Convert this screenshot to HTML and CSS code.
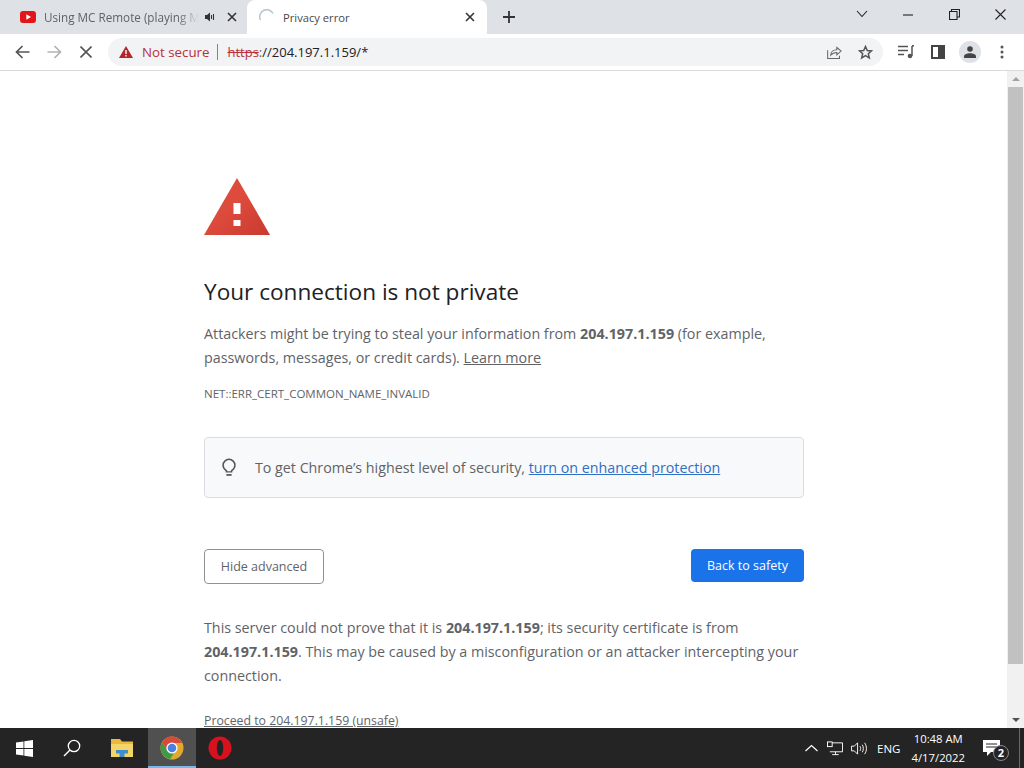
FILE: index.html
```html
<!DOCTYPE html>
<html lang="en">
<head>
    <meta charset="UTF-8">
    <title>Privacy error</title>
    <link rel="stylesheet" href="styles.css">
</head>
<body>
    <!-- Tabs -->
    <div class="tabstrip">
        <div class="tab">
            <svg class="yt-icon" width="16" height="12" viewBox="0 0 16 12"><rect width="16" height="12" rx="3" fill="#e3151a"/><path d="M6.300 3.200 11 6 6.300 8.800z" fill="#fff"/></svg>
            <span class="tab-title">Using MC Remote (playing MC</span>
            <svg class="tab-audio" width="10" height="10" viewBox="0 0 10 10"><path d="M0 3h2L5 .5v9L2 7H0z" fill="#333"/><path d="M6.500 3v4M8.500 2v6" stroke="#333" stroke-width="1.100"/></svg>
            <svg class="tab-close" width="10" height="10" viewBox="0 0 10 10"><path d="M1 1l8 8M9 1l-8 8" stroke="#333" stroke-width="1.600"/></svg>
        </div>
        <div class="tab tab-active">
            <svg class="tab-spinner" width="16" height="16" viewBox="0 0 16 16"><path d="M1.500 11A7 7 0 0 1 14 4.500" fill="none" stroke="#b9c3cc" stroke-width="1.500"/></svg>
            <span class="tab-title">Privacy error</span>
            <svg class="tab-close" width="10" height="10" viewBox="0 0 10 10"><path d="M1 1l8 8M9 1l-8 8" stroke="#333" stroke-width="1.600"/></svg>
        </div>
        <svg class="new-tab" width="12" height="12" viewBox="0 0 12 12"><path d="M6 0v12M0 6h12" stroke="#333" stroke-width="1.800"/></svg>
        <div class="window-controls">
            <svg width="12" height="8" viewBox="0 0 12 8"><path d="M1 1l5 5.500L11 1" fill="none" stroke="#222" stroke-width="1.100"/></svg>
            <svg width="11" height="11" viewBox="0 0 11 11"><path d="M0 6h10" stroke="#222" stroke-width="1.100"/></svg>
            <svg width="11" height="11" viewBox="0 0 11 11"><path d="M.5 2.500h7.500v8H.5zM2.500 2.500V.5h8v7.500H8" fill="none" stroke="#222" stroke-width="1.100"/></svg>
            <svg width="11" height="11" viewBox="0 0 11 11"><path d="M.5.5l10 10M10.500.5l-10 10" stroke="#222" stroke-width="1.100"/></svg>
        </div>
    </div>

    <!-- Toolbar -->
    <div class="toolbar">
        <svg class="nav-icon nav-back" width="15" height="14" viewBox="0 0 15 14"><path d="M14.500 7H2M7.500 1 1.500 7l6 6" fill="none" stroke="#555" stroke-width="1.700"/></svg>
        <svg class="nav-icon nav-forward" width="15" height="14" viewBox="0 0 15 14"><path d="M.5 7H13M7.500 1l6 6-6 6" fill="none" stroke="#b0b2b5" stroke-width="1.700"/></svg>
        <svg class="nav-icon nav-stop" width="12" height="12" viewBox="0 0 12 12"><path d="M.5.5l11 11M11.500.5l-11 11" stroke="#555" stroke-width="1.600"/></svg>
        <div class="omnibox">
            <svg class="warn-small" width="14" height="12" viewBox="0 0 14 12"><path d="M7 0l7 12H0z" fill="#b3262e"/><path d="M6.300 4h1.400v4H6.300zM6.300 9h1.400v1.500H6.300z" fill="#fff"/></svg>
            <span class="not-secure">Not secure</span>
            <span class="omni-sep"></span>
            <span class="url"><s class="url-scheme">https</s><span class="url-colon">:</span>//204.197.1.159/*</span>
            <svg class="omni-share" width="15" height="15" viewBox="0 0 16 15"><path d="M.7 5v9h12.600v-3" fill="none" stroke="#666" stroke-width="1.100"/><path d="M4 10.500c0-4 3-6 6.500-6V2L15 6l-4.500 4V7.500C8 7.500 5.500 8.500 4 10.500z" fill="none" stroke="#666" stroke-width="1.100"/></svg>
            <svg class="omni-star" width="15" height="15" viewBox="0 0 15 15"><path d="M7.500 1.500l1.800 4 4.200.4-3.200 2.800 1 4.200-3.800-2.200-3.800 2.200 1-4.200L1.500 5.900l4.200-.4z" fill="none" stroke="#555" stroke-width="1.500"/></svg>
        </div>
        <div class="toolbar-right">
            <svg class="tool-media" width="16" height="14" viewBox="0 0 16 14"><path d="M0 1.500h10M0 5.500h10M0 9.500h6" stroke="#555" stroke-width="1.500"/><path d="M14 1v10" stroke="#555" stroke-width="1.500"/><path d="M14 .8h2" stroke="#555" stroke-width="1.500"/><circle cx="12" cy="11" r="2.300" fill="#555"/></svg>
            <svg class="tool-panel" width="14" height="14" viewBox="0 0 14 14"><rect x="1" y="1" width="12" height="12" fill="none" stroke="#444" stroke-width="2"/><rect x="7" y="1" width="6" height="12" fill="#444"/></svg>
            <span class="avatar"><svg width="12" height="12" viewBox="0 0 12 12"><circle cx="6" cy="3" r="2.800" fill="#444"/><path d="M0 12V10.500C0 8.500 3 7.300 6 7.300s6 1.200 6 3.200V12z" fill="#444"/></svg></span>
            <svg class="tool-menu" width="4" height="14" viewBox="0 0 4 14"><circle cx="2" cy="2" r="1.500" fill="#555"/><circle cx="2" cy="7" r="1.500" fill="#555"/><circle cx="2" cy="12" r="1.500" fill="#555"/></svg>
        </div>
    </div>

    <!-- Page -->
    <div class="viewport">
        <div class="page">
            <svg class="warn-big" width="66" height="58" viewBox="0 0 66 58">
                <defs>
                    <linearGradient id="warn-fill" x1="0" y1="0" x2="1" y2="1">
                        <stop offset="0.450" stop-color="#dd4b3d"/>
                        <stop offset="1" stop-color="#c9392e"/>
                    </linearGradient>
                </defs>
                <path d="M33 0 66 57H0z" fill="url(#warn-fill)"/>
                <path d="M29.500 25h7v11h-7zM29.500 42h7v6h-7z" fill="#fff"/>
            </svg>
            <h1>Your connection is not private</h1>
            <p class="summary">Attackers might be trying to steal your information from <b>204.197.1.159</b> (for example, passwords, messages, or credit cards). <a href="#">Learn more</a></p>
            <p class="error-code">NET::ERR_CERT_COMMON_NAME_INVALID</p>
            <div class="tip">
                <svg width="14" height="19" viewBox="0 0 16 20"><path d="M5 13.500C2.500 12 1.200 10 1.200 7.500a6.800 6.800 0 0 1 13.600 0c0 2.500-1.300 4.500-3.800 6v1.500H5z" fill="none" stroke="#555" stroke-width="1.700"/><path d="M5 18.500h6" stroke="#555" stroke-width="2"/></svg>
                <span>To get Chrome’s highest level of security, <a class="link-blue" href="#">turn on enhanced protection</a></span>
            </div>
            <div class="buttons">
                <button class="btn-outline" type="button">Hide advanced</button>
                <button class="btn-primary" type="button">Back to safety</button>
            </div>
            <p class="details">This server could not prove that it is <b>204.197.1.159</b>; its security certificate is from <b>204.197.1.159</b>. This may be caused by a misconfiguration or an attacker intercepting your connection.</p>
            <a class="proceed" href="#">Proceed to 204.197.1.159 (unsafe)</a>
        </div>
        <div class="scrollbar">
            <span class="arrow-up"></span>
            <div class="thumb"></div>
            <span class="arrow-down"></span>
        </div>
    </div>

    <!-- Taskbar -->
    <div class="taskbar">
        <div class="task-item">
            <svg width="17" height="17" viewBox="0 0 17 17"><path d="M0 2.500 7.500 1.400v6.600H0zM8.300 1.300 17 0v8H8.300zM0 9h7.500v6.600L0 14.500zM8.300 9H17v8l-8.700-1.300z" fill="#fff"/></svg>
        </div>
        <div class="task-item">
            <svg width="18" height="18" viewBox="0 0 18 18"><circle cx="11" cy="7" r="5.700" fill="none" stroke="#fff" stroke-width="1.300"/><path d="M7 11 1 17" stroke="#fff" stroke-width="1.500"/></svg>
        </div>
        <div class="task-item task-folder">
            <svg width="22" height="18" viewBox="0 0 22 18"><path d="M0 0h9l2 2.500h11V18H0z" fill="#e9b83f"/><path d="M0 5h22v13H0z" fill="#f6d568"/><path d="M5 14.500V11h12v3.500h-3.500V18h-5v-3.500z" fill="#3f8fd0"/></svg>
        </div>
        <div class="task-item task-active">
            <svg width="24" height="24" viewBox="0 0 24 24"><circle cx="12" cy="12" r="11.500" fill="#e0a92e"/><path d="M12 .5A11.500 11.500 0 0 0 2.100 6.200L7 14.500 12 7h10a11.500 11.500 0 0 0-10-6.500z" fill="#d9493b"/><path d="M2.100 6.200A11.500 11.500 0 0 0 10 23.300L14.500 16 7 14.500z" fill="#3e9a4b"/><circle cx="12" cy="12" r="5.600" fill="#fff"/><circle cx="12" cy="12" r="4.300" fill="#4a7fe6"/></svg>
        </div>
        <div class="task-item">
            <svg width="24" height="24" viewBox="0 0 24 24"><circle cx="12" cy="12" r="11.500" fill="#d5121e"/><ellipse cx="12" cy="12" rx="3.200" ry="8" fill="#242424"/></svg>
        </div>
        <div class="tray">
            <svg class="tray-chevron" width="13" height="8" viewBox="0 0 13 8"><path d="M.5 7l6-5.500 6 5.500" fill="none" stroke="#fff" stroke-width="1.200"/></svg>
            <svg class="tray-net" width="16" height="15" viewBox="0 0 17 15"><path d="M3 1.500h13.500v9.500H3M9 11v3M5.500 14h7" fill="none" stroke="#fff"/><rect x=".5" y=".5" width="5" height="5" fill="#242424" stroke="#fff"/></svg>
            <svg class="tray-vol" width="16" height="15" viewBox="0 0 17 15"><path d="M.5 5h3L7 1.500v12L3.500 10h-3zM9.500 5c1 1.500 1 3.500 0 5M12 3.500c1.500 2.500 1.500 5.500 0 8M14.500 1.500c2.500 3.500 2.500 8.500 0 12" fill="none" stroke="#fff"/></svg>
            <span class="tray-lang">ENG</span>
            <div class="clock"><span>10:48 AM</span><span>4/17/2022</span></div>
            <span class="notify">
                <svg width="17" height="16" viewBox="0 0 17 16"><path d="M0 0h17v12H8l-4 4v-4H0z" fill="#fff"/><path d="M3 4h11M3 7h11" stroke="#242424" stroke-width="1"/></svg>
                <span class="notify-badge">2</span>
            </span>
            <span class="show-desktop"></span>
        </div>
    </div>
</body>
</html>
```

FILE: styles.css
```css
html, body {
    height: 100%;
}

body {
    margin: 0;
    display: flex;
    flex-direction: column;
    overflow: hidden;
    font-family: "Open Sans", "Noto Sans", sans-serif;
    background-color: #ffffff;
}

/* Tabs */
.tabstrip {
    height: 34px;
    flex: none;
    display: flex;
    align-items: flex-end;
    padding-left: 8px;
    background-color: #dee1e6;
}

.tab {
    width: 239px;
    height: 34px;
    box-sizing: border-box;
    display: flex;
    align-items: center;
    padding: 0 10px 0 12px;
    font-size: 11.700px;
    color: #5f6368;
}

.tab-active {
    width: 240px;
    padding-right: 12px;
    background-color: #ffffff;
    border-radius: 8px 8px 0 0;
    font-size: 11.200px;
    color: #45494d;
}

.yt-icon {
    flex: none;
    margin-right: 8px;
}

.tab-spinner {
    flex: none;
    margin-right: 8px;
}

.tab-title {
    flex: 1;
    overflow: hidden;
    white-space: nowrap;
}

.tab:first-child .tab-title {
    -webkit-mask-image: linear-gradient(90deg, #000 86%, transparent);
    mask-image: linear-gradient(90deg, #000 86%, transparent);
}

.tab-audio {
    flex: none;
    margin: 0 12px 0 6px;
}

.tab-close {
    flex: none;
}

.new-tab {
    flex: none;
    align-self: center;
    margin-left: 16px;
}

.window-controls {
    margin-left: auto;
    align-self: stretch;
    display: flex;
    align-items: center;
    gap: 35px;
    padding: 0 18px 6px 0;
}

/* Toolbar */
.toolbar {
    height: 37px;
    flex: none;
    box-sizing: border-box;
    display: flex;
    align-items: center;
    padding: 0 0 0 15px;
    background-color: #ffffff;
    border-bottom: 1px solid #d9dadc;
}

.nav-icon {
    flex: none;
}

.nav-forward {
    margin-left: 17px;
}

.nav-stop {
    margin-left: 18px;
}

.omnibox {
    width: 775px;
    height: 28px;
    flex: none;
    box-sizing: border-box;
    display: flex;
    align-items: center;
    margin-left: 16px;
    padding: 0 10px 0 11px;
    border-radius: 14px;
    background-color: #f1f3f4;
    font-size: 13.300px;
}

.warn-small {
    flex: none;
    margin-right: 9px;
}

.not-secure {
    color: #b8323a;
}

.omni-sep {
    width: 1px;
    height: 16px;
    margin: 0 9px 0 8px;
    background-color: #808488;
}

.url {
    flex: 1;
    font-size: 13px;
    color: #202124;
}

.url-scheme {
    color: #b8323a;
}

.url-colon {
    color: #5f6368;
}

.omni-share {
    margin-right: 16px;
}

.toolbar-right {
    flex: 1;
    display: flex;
    align-items: center;
    padding-left: 15px;
}

.tool-panel {
    margin-left: 17px;
}

.tool-menu {
    margin-left: 19px;
}

.avatar {
    width: 22px;
    height: 22px;
    margin-left: 14px;
    display: flex;
    align-items: center;
    justify-content: center;
    border-radius: 50%;
    background-color: #dee1e6;
}

/* Page */
.viewport {
    flex: 1;
    min-height: 0;
    display: flex;
}

.page {
    flex: 1;
    min-width: 0;
    overflow: hidden;
    padding: 107px 0 0 204px;
    box-sizing: border-box;
}

.warn-big {
    display: block;
}

h1 {
    margin: 40px 0 0;
    font-size: 22.600px;
    font-weight: 400;
    line-height: 32px;
    color: #202124;
}

.summary {
    width: 600px;
    margin: 14px 0 0;
    font-size: 14.300px;
    line-height: 24px;
    color: #5f6368;
}

.summary a, .proceed {
    color: #5f6368;
}

.error-code {
    margin: 16px 0 0;
    font-size: 11.500px;
    line-height: 16px;
    color: #5f6368;
}

.tip {
    width: 600px;
    height: 61px;
    box-sizing: border-box;
    margin-top: 35px;
    display: flex;
    align-items: center;
    gap: 19px;
    padding-left: 17px;
    border: 1px solid #dadce0;
    border-radius: 4px;
    background-color: #f8f9fa;
    font-size: 14.250px;
    color: #5f6368;
}

.link-blue {
    color: #2f6fc4;
}

.buttons {
    width: 600px;
    margin-top: 51px;
    display: flex;
    justify-content: space-between;
    align-items: flex-start;
}

button {
    font-family: inherit;
    font-size: 12.500px;
    border-radius: 4px;
}

.btn-outline {
    width: 120px;
    height: 35px;
    background-color: #ffffff;
    border: 1px solid #909396;
    color: #5f6368;
}

.btn-primary {
    width: 113px;
    height: 33px;
    background-color: #1a73e8;
    border: none;
    color: #ffffff;
}

.details {
    width: 600px;
    margin: 32px 0 0;
    font-size: 14.300px;
    line-height: 24px;
    color: #5f6368;
}

.proceed {
    display: inline-block;
    margin-top: 25px;
    font-size: 12.300px;
    line-height: 16px;
}

/* Scrollbar */
.scrollbar {
    width: 17px;
    flex: none;
    display: flex;
    flex-direction: column;
    align-items: center;
    background-color: #f1f1f1;
}

.thumb {
    width: 15px;
    height: 577px;
    background-color: #c1c1c1;
}

.arrow-up, .arrow-down {
    width: 0;
    height: 0;
    border-left: 4px solid transparent;
    border-right: 4px solid transparent;
}

.arrow-up {
    margin: 6px 0 6px;
    border-bottom: 4px solid #a3a3a3;
}

.arrow-down {
    margin-top: auto;
    margin-bottom: 6px;
    border-top: 4px solid #505050;
}

/* Taskbar */
.taskbar {
    height: 40px;
    flex: none;
    display: flex;
    align-items: stretch;
    background-color: #242424;
    color: #ffffff;
}

.task-item {
    width: 48px;
    display: flex;
    align-items: center;
    justify-content: center;
    box-sizing: border-box;
}

.task-folder {
    width: 52px;
}

.task-active {
    padding-top: 2px;
    background-color: #505050;
    border-bottom: 2px solid #76b9ed;
}

.tray {
    margin-left: auto;
    display: flex;
    align-items: center;
    padding-right: 4px;
    font-size: 11.300px;
}

.tray-net {
    margin-left: 9px;
}

.tray-vol {
    margin-left: 8px;
}

.tray-lang {
    margin-left: 10px;
    font-size: 11.500px;
}

.clock {
    display: flex;
    flex-direction: column;
    align-items: center;
    margin-left: 11px;
    line-height: 19px;
}

.notify {
    position: relative;
    margin-left: 18px;
    margin-right: 19px;
    display: flex;
}

.notify-badge {
    position: absolute;
    right: -9px;
    bottom: -5px;
    width: 14px;
    height: 14px;
    border: 1px solid #888;
    border-radius: 50%;
    background-color: #242424;
    font-size: 11px;
    font-weight: 700;
    line-height: 14px;
    text-align: center;
}

.show-desktop {
    width: 1px;
    align-self: stretch;
    background-color: #6a6a6a;
}
```
